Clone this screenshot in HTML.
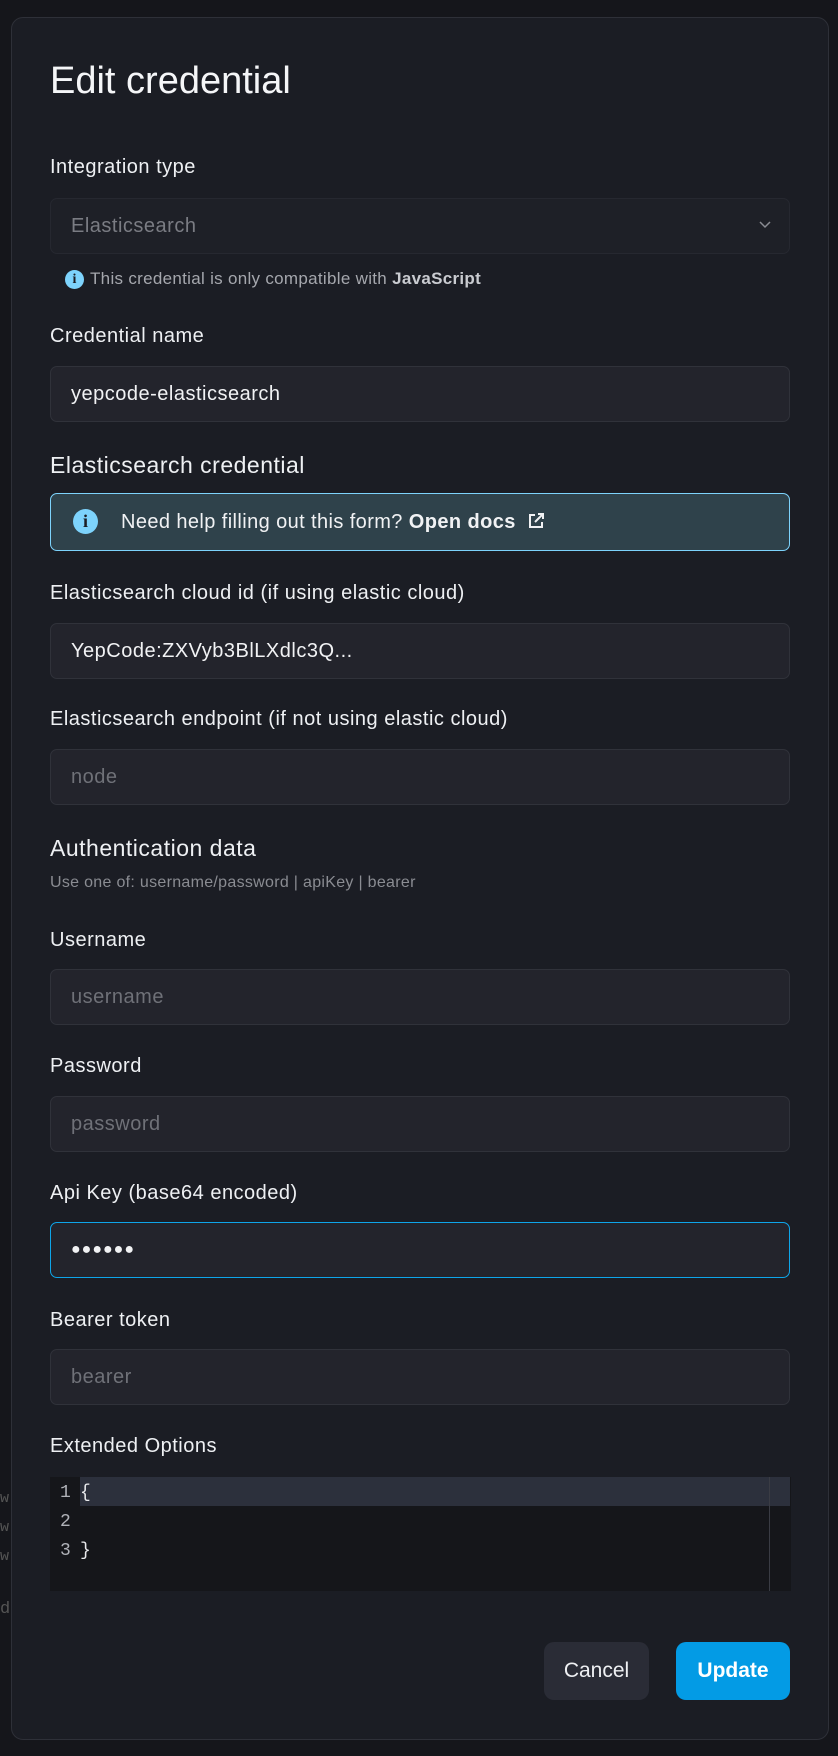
<!DOCTYPE html>
<html><head><meta charset="utf-8"><style>
*{box-sizing:border-box;margin:0;padding:0}
body{width:838px;height:1756px;background:#15161b;font-family:"Liberation Sans",sans-serif;color:#f1f2f4;position:relative;overflow:hidden}
.modal{position:absolute;left:11px;top:17px;width:818px;height:1723px;background:#1b1d24;border:1px solid #2e3038;border-radius:12px}
.a{position:absolute}
.lbl{position:absolute;left:50px;font-size:20px;letter-spacing:0.5px;color:#eef0f3}
.inp{position:absolute;left:50px;width:740px;height:56px;background:#23242c;border:1px solid #30323a;border-radius:7px;font-size:20px;letter-spacing:0.5px;padding-left:20px;line-height:54px;color:#f1f2f4}
.ph{color:#6f7178}
.h2{position:absolute;left:50px;font-size:23px;letter-spacing:0.5px;color:#eef0f3}
.ic{position:absolute;border-radius:50%;background:#7dd3fc;color:#1b1d24;font-weight:bold;text-align:center;font-family:"Liberation Serif",serif;letter-spacing:0}
</style></head><body>
<div class="a" style="left:0;top:1484px;font:15px 'Liberation Mono',monospace;color:#555;line-height:29px">w<br>w<br>w</div>
<div class="a" style="left:0;top:1600px;font:17px 'Liberation Mono',monospace;color:#555">d</div>
<div class="modal"></div>
<div class="a" style="left:50px;top:60px;font-size:38px;color:#f5f6f8">Edit credential</div>
<div class="lbl" style="top:156px">Integration type</div>
<div class="inp" style="top:198px;background:#1e2027;border-color:#262830;color:#7a7c83">Elasticsearch
<svg style="position:absolute;right:18px;top:22px" width="12" height="8" viewBox="0 0 12 8"><path d="M1 1l5 5 5-5" stroke="#8a8c93" stroke-width="1.5" fill="none"/></svg></div>
<div class="ic" style="left:65px;top:270px;width:19px;height:19px;font-size:14px;line-height:19px">i</div>
<div class="a" style="left:90px;top:269px;font-size:17px;letter-spacing:0.3px;color:#a5a7ad;line-height:20px">This credential is only compatible with <b style="color:#c9cbd0">JavaScript</b></div>
<div class="lbl" style="top:325px">Credential name</div>
<div class="inp" style="top:366px">yepcode-elasticsearch</div>
<div class="h2" style="top:452px">Elasticsearch credential</div>
<div class="a" style="left:50px;top:493px;width:740px;height:58px;background:#2f424b;border:1px solid #7dd3fc;border-radius:7px;font-size:20px;letter-spacing:0.4px;line-height:56px;padding-left:70px;color:#f1f2f4"><div class="ic" style="left:22px;top:15px;width:25px;height:25px;font-size:18px;line-height:25px">i</div>Need help filling out this form? <b>Open docs</b>
<svg style="vertical-align:-3px;margin-left:4px" width="20" height="20" viewBox="0 0 20 20" fill="none" stroke="#f1f2f4" stroke-width="2"><path d="M9 4H4v12h12v-5M12 3h5v5M17 3l-8 8"/></svg></div>
<div class="lbl" style="top:582px">Elasticsearch cloud id (if using elastic cloud)</div>
<div class="inp" style="top:623px">YepCode:ZXVyb3BlLXdlc3Q...</div>
<div class="lbl" style="top:708px">Elasticsearch endpoint (if not using elastic cloud)</div>
<div class="inp ph" style="top:749px">node</div>
<div class="h2" style="top:835px">Authentication data</div>
<div class="a" style="left:50px;top:874px;font-size:16px;letter-spacing:0.3px;color:#8a8c92">Use one of: username/password | apiKey | bearer</div>
<div class="lbl" style="top:929px">Username</div>
<div class="inp ph" style="top:969px">username</div>
<div class="lbl" style="top:1055px">Password</div>
<div class="inp ph" style="top:1096px">password</div>
<div class="lbl" style="top:1182px">Api Key (base64 encoded)</div>
<div class="inp" style="top:1222px;border-color:#0ea5e9;font-size:16px;letter-spacing:1px">●●●●●●</div>
<div class="lbl" style="top:1309px">Bearer token</div>
<div class="inp ph" style="top:1349px">bearer</div>
<div class="lbl" style="top:1435px">Extended Options</div>
<div class="a" style="left:50px;top:1477px;width:741px;height:114px;background:#15161a"></div>
<div class="a" style="left:80px;top:1477px;width:710px;height:29px;background:#2c303c"></div>
<div class="a" style="left:769px;top:1477px;width:1px;height:114px;background:#3a3c44"></div>
<div class="a" style="left:60px;top:1479px;font:18px 'Liberation Mono',monospace;line-height:29px;color:#b0b2b8">1<br>2<br>3</div>
<div class="a" style="left:80px;top:1479px;font:18px 'Liberation Mono',monospace;line-height:29px;color:#e8e9ec">{<br><br>}</div>
<div class="a" style="left:544px;top:1642px;width:105px;height:58px;background:#2a2c36;border-radius:10px;font-size:21px;line-height:58px;text-align:center;color:#eef0f3">Cancel</div>
<div class="a" style="left:676px;top:1642px;width:114px;height:58px;background:#039be5;border-radius:10px;font-size:21px;font-weight:bold;line-height:58px;text-align:center;color:#fff">Update</div>
</body></html>
